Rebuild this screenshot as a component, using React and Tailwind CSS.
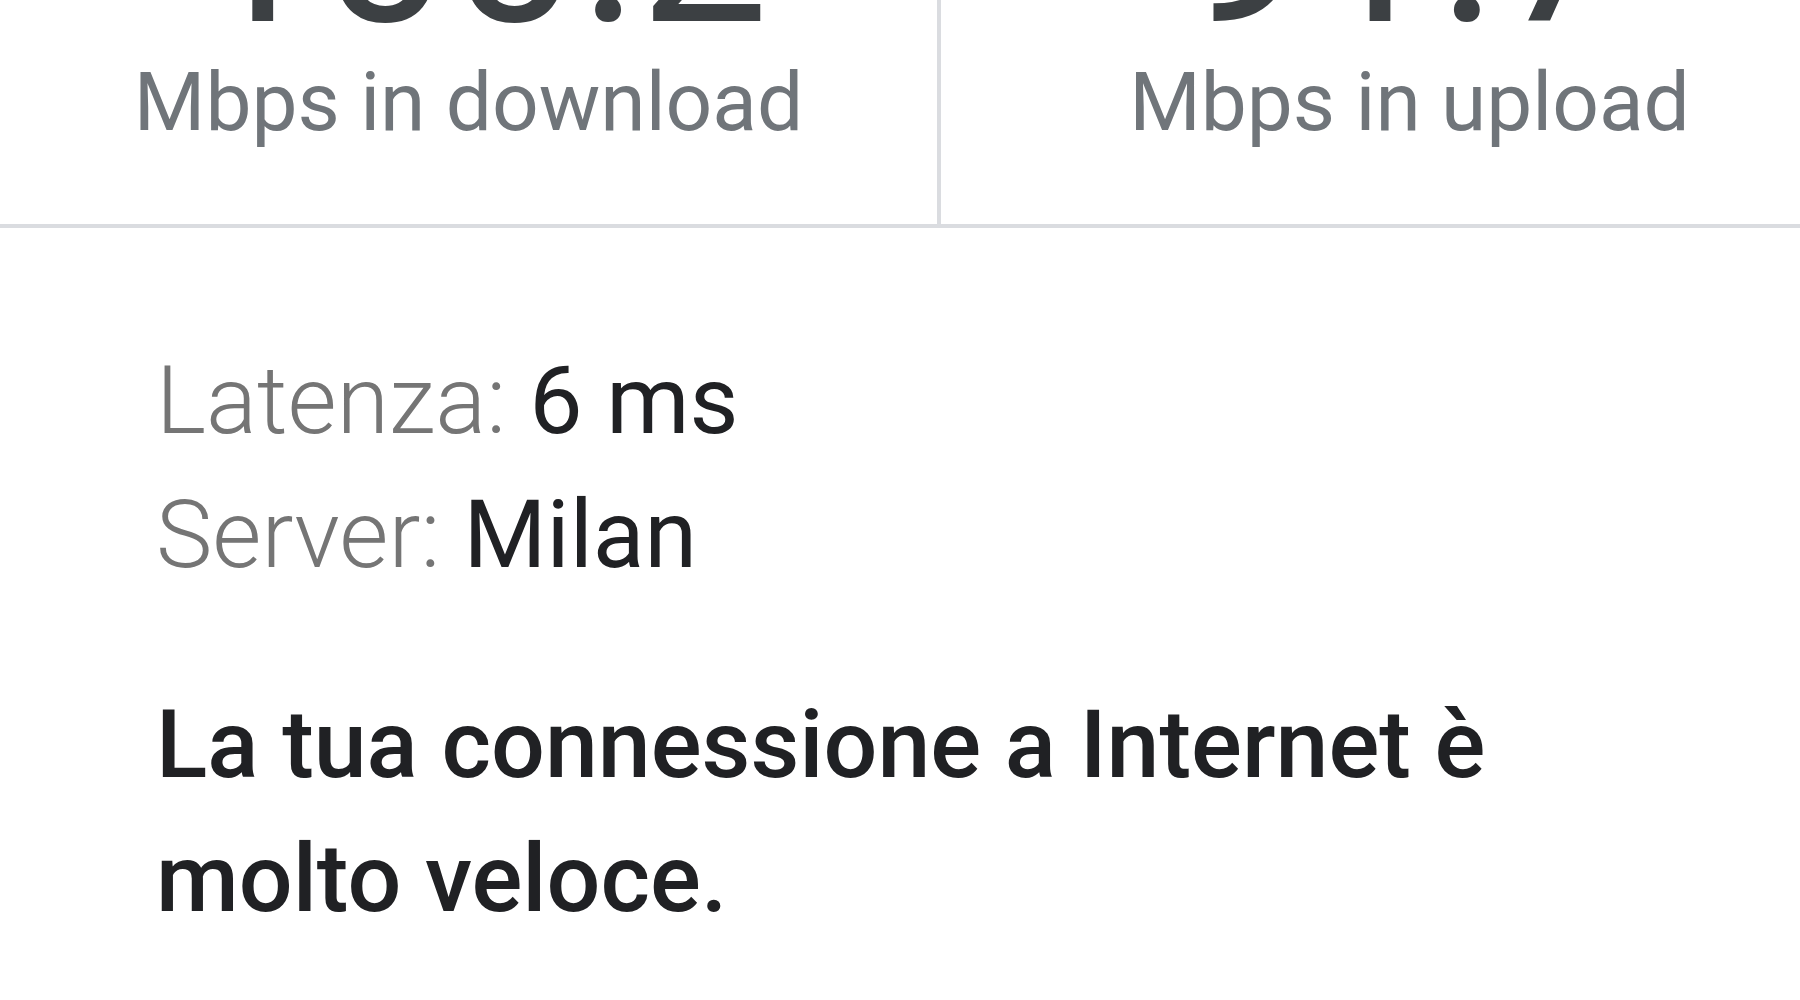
export default function App() {
  return (
    <div className="w-[1800px] h-[1000px] overflow-hidden bg-white font-['Roboto','Liberation_Sans',sans-serif]">
      <div className="w-[1880px] h-[228px] flex border-b-4 border-[#dadce0]">
        <div className="w-[941px] border-r-4 border-[#dadce0] flex flex-col items-center">
          <div className="mt-[-172px] text-[230px] leading-none text-[#3c4043] whitespace-nowrap pl-[23px]">100.2</div>
          <div className="mt-[3px] text-[82px] leading-none text-[#70757a] whitespace-nowrap">Mbps in download</div>
        </div>
        <div className="w-[937px] flex flex-col items-center">
          <div className="mt-[-172px] text-[230px] leading-none text-[#3c4043] whitespace-nowrap pr-[12px]">91.7</div>
          <div className="mt-[3px] text-[82px] leading-none text-[#70757a] whitespace-nowrap">Mbps in upload</div>
        </div>
      </div>
      <div className="w-[1880px] pl-[156px] pr-[158px] pt-[106px]">
        <div className="text-[95px] leading-[134px] whitespace-nowrap">
          <span className="font-light text-[#757575]">Latenza: </span>
          <span className="text-[#202124]">6 ms</span>
        </div>
        <div className="text-[95px] leading-[134px] whitespace-nowrap">
          <span className="font-light text-[#757575]">Server: </span>
          <span className="text-[#202124]">Milan</span>
        </div>
        <p className="mt-[76px] text-[95px] leading-[134px] font-medium text-[#202124]">
          La tua connessione a Internet è molto veloce.
        </p>
      </div>
    </div>
  );
}
